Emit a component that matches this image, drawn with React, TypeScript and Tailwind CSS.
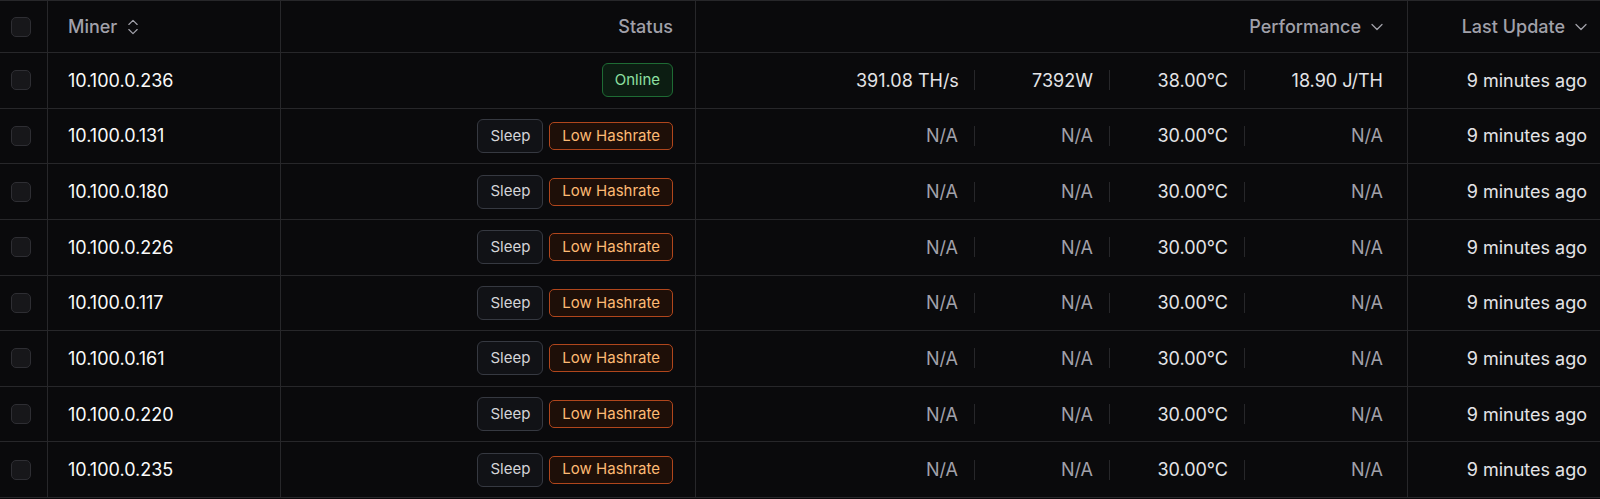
import React from "react";
import { ChevronsUpDown, ChevronDown } from "lucide-react";

type Row = { ip: string; online: boolean; hash: string; power: string; temp: string; eff: string };

const rows: Row[] = [
  { ip: "10.100.0.236", online: true, hash: "391.08 TH/s", power: "7392W", temp: "38.00°C", eff: "18.90 J/TH" },
  { ip: "10.100.0.131", online: false, hash: "N/A", power: "N/A", temp: "30.00°C", eff: "N/A" },
  { ip: "10.100.0.180", online: false, hash: "N/A", power: "N/A", temp: "30.00°C", eff: "N/A" },
  { ip: "10.100.0.226", online: false, hash: "N/A", power: "N/A", temp: "30.00°C", eff: "N/A" },
  { ip: "10.100.0.117", online: false, hash: "N/A", power: "N/A", temp: "30.00°C", eff: "N/A" },
  { ip: "10.100.0.161", online: false, hash: "N/A", power: "N/A", temp: "30.00°C", eff: "N/A" },
  { ip: "10.100.0.220", online: false, hash: "N/A", power: "N/A", temp: "30.00°C", eff: "N/A" },
  { ip: "10.100.0.235", online: false, hash: "N/A", power: "N/A", temp: "30.00°C", eff: "N/A" },
];

const Checkbox = () => (
  <div className="w-[20px] h-[20px] rounded-[5px] border border-[#2e2e33] bg-[#17171a]" />
);

const Val = ({ v, wide }: { v: string; wide?: boolean }) => (
  <div
    className={`${wide ? "w-[122px]" : "w-[102px]"} text-right whitespace-nowrap ${
      v === "N/A" ? "text-[#a1a1aa]" : "text-[#e4e4e7]"
    }`}
  >
    {v}
  </div>
);

const Sep = () => <div className="w-px h-[20px] bg-[#27272a]" />;

export default function App() {
  return (
    <div
      className="w-[1600px] h-[499px] bg-[#0a0a0c] overflow-hidden text-[18px]"
      style={{ fontFamily: "Inter, 'Noto Sans', sans-serif" }}
    >
      <div className="grid grid-cols-[48px_233px_415px_712px_192px] border-t border-[#27272a]">
        {/* header */}
        <div className="h-[52px] border-b border-r border-[#27272a] flex items-center pl-[11px]">
          <Checkbox />
        </div>
        <div className="h-[52px] border-b border-r border-[#27272a] flex items-center pl-[20px] text-[#a1a1aa] font-medium gap-[6px]">
          <span>Miner</span>
          <ChevronsUpDown size={20} strokeWidth={1.4} className="text-[#a1a1aa]" />
        </div>
        <div className="h-[52px] border-b border-r border-[#27272a] flex items-center justify-end pr-[22px] text-[#a1a1aa] font-medium">
          Status
        </div>
        <div className="h-[52px] border-b border-r border-[#27272a] flex items-center justify-end pr-[20px] text-[#a1a1aa] font-medium gap-[6px]">
          <span>Performance</span>
          <ChevronDown size={20} strokeWidth={1.5} />
        </div>
        <div className="h-[52px] border-b border-[#27272a] flex items-center justify-end pr-[9px] text-[#a1a1aa] font-medium gap-[6px]">
          <span className="whitespace-nowrap">Last Update</span>
          <ChevronDown size={20} strokeWidth={1.5} />
        </div>

        {rows.map((r) => (
          <React.Fragment key={r.ip}>
            <div className="h-[55.625px] border-b border-r border-[#27272a] flex items-center pl-[11px]">
              <Checkbox />
            </div>
            <div className="h-[55.625px] border-b border-r border-[#27272a] flex items-center pl-[20px] text-[#fafafa]">
              {r.ip}
            </div>
            <div className="h-[55.625px] border-b border-r border-[#27272a] flex items-center justify-end pr-[22px] gap-[6px] text-[15px]">
              {r.online ? (
                <span className="h-[34px] px-[12px] flex items-center rounded-[6px] border border-[#1e6b34] bg-[#0c1d12] text-[#8ee0a2]">
                  Online
                </span>
              ) : (
                <>
                  <span className="h-[34px] px-[12px] flex items-center rounded-[6px] border border-[#363941] bg-[#111216] text-[#d4d4d8]">
                    Sleep
                  </span>
                  <span className="h-[28px] px-[12px] flex items-center rounded-[5px] border border-[#b0461c] bg-[#1e0f08] text-[#fdba74] whitespace-nowrap">
                    Low Hashrate
                  </span>
                </>
              )}
            </div>
            <div className="h-[55.625px] border-b border-r border-[#27272a] flex items-center justify-end pr-[24px] gap-[16px]">
              <Val v={r.hash} />
              <Sep />
              <Val v={r.power} />
              <Sep />
              <Val v={r.temp} />
              <Sep />
              <Val v={r.eff} wide />
            </div>
            <div className="h-[55.625px] border-b border-[#27272a] flex items-center justify-end pr-[13px] text-[#e4e4e7] whitespace-nowrap">
              9 minutes ago
            </div>
          </React.Fragment>
        ))}
      </div>
    </div>
  );
}
